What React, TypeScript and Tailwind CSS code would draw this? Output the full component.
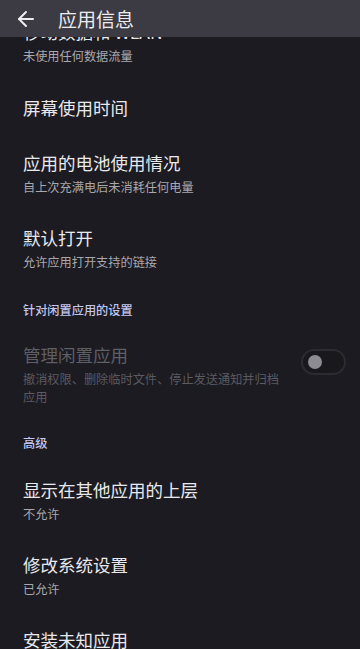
import { ArrowLeft } from "lucide-react"

const font = { fontFamily: '"Noto Sans CJK SC", "Noto Sans", sans-serif' }

interface RowProps {
  title: string
  subtitle?: string
  disabled?: boolean
  pt?: string
  children?: React.ReactNode
}

function Row({ title, subtitle, disabled, pt = "pt-[15px]", children }: RowProps) {
  return (
    <div className={`flex items-center pl-[23px] pr-[14px] ${pt} pb-[15px]`}>
      <div className="flex-1 min-w-0">
        <div
          className={`text-[17.5px] leading-[24px] ${disabled ? "text-[#5e5e65]" : "text-[#e9e9ed]"}`}
        >
          {title}
        </div>
        {subtitle && (
          <div
            className={`mt-[3px] text-[12.2px] leading-[18px] ${disabled ? "text-[#5a5a61]" : "text-[#a8a8ae]"}`}
          >
            {subtitle}
          </div>
        )}
      </div>
      {children}
    </div>
  )
}

function Category({ label, pt }: { label: string; pt: string }) {
  return (
    <div className={`pl-[23px] ${pt} pb-[8px] text-[12.2px] leading-[18px] font-medium text-[#c4c6ee]`}>
      {label}
    </div>
  )
}

export default function App() {
  return (
    <div className="relative w-[360px] h-[649px] overflow-hidden bg-[#1c1b21]" style={font}>
      {/* toolbar over the scrolled list */}
      <div className="absolute top-0 left-0 right-0 z-10 h-[37px] bg-[#3c3b43] flex items-center">
        <ArrowLeft size={24} strokeWidth={2} className="ml-[14px] text-[#ececf0]" />
        <span className="ml-[20px] text-[19px] leading-[24px] text-[#ececf0]">应用信息</span>
      </div>

      <div className="pt-[5px]">
        <Row title="移动数据和 WLAN" subtitle="未使用任何数据流量" />
        <div className="pl-[23px] pt-[16px] pb-[16px] text-[17.5px] leading-[24px] text-[#e9e9ed]">
          屏幕使用时间
        </div>
        <Row title="应用的电池使用情况" subtitle="自上次充满电后未消耗任何电量" />
        <Row title="默认打开" subtitle="允许应用打开支持的链接" />

        <Category label="针对闲置应用的设置" pt="pt-[15px]" />
        <Row
          title="管理闲置应用"
          subtitle="撤消权限、删除临时文件、停止发送通知并归档应用"
          disabled
          pt="pt-[16px]"
        >
          <div className="ml-[10px] shrink-0 w-[45px] h-[26px] rounded-full border-2 border-[#2c2b31] bg-[#19181d] flex items-center pl-[5px] self-start mt-[6px]">
            <div className="w-[14px] h-[14px] rounded-full bg-[#8d8c93]" />
          </div>
        </Row>

        <Category label="高级" pt="pt-[13px]" />
        <Row title="显示在其他应用的上层" subtitle="不允许" pt="pt-[18px]" />
        <Row title="修改系统设置" subtitle="已允许" />
        <Row title="安装未知应用" />
      </div>
    </div>
  )
}
